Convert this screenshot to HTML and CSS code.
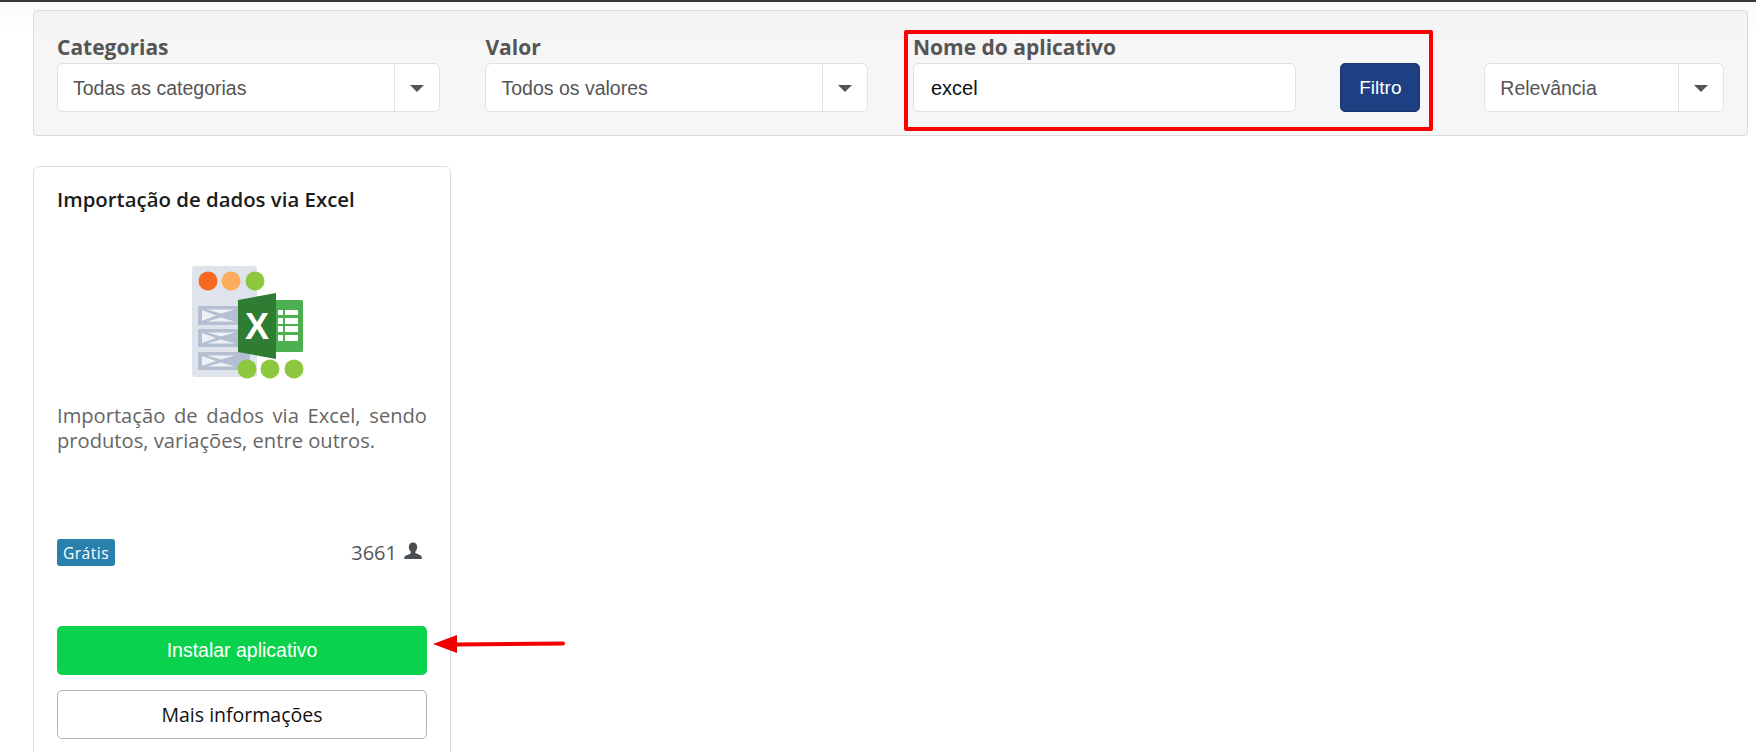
FILE: index.html
```html
<!DOCTYPE html>
<html lang="pt-BR">
<head>
<meta charset="utf-8">
<title>Aplicativos</title>
<link rel="stylesheet" href="styles.css">
</head>
<body>
<div class="topbar"></div>
<main class="content">
  <section class="filters">
    <div class="field field-first">
      <label class="field-label">Categorias</label>
      <div class="select"><span class="select-text">Todas as categorias</span><span class="select-arrow"><i class="caret"></i></span></div>
    </div>
    <div class="field">
      <label class="field-label">Valor</label>
      <div class="select"><span class="select-text">Todos os valores</span><span class="select-arrow"><i class="caret"></i></span></div>
    </div>
    <div class="field field-name">
      <label class="field-label">Nome do aplicativo</label>
      <div class="input">excel</div>
    </div>
    <button class="filter-btn">Filtro</button>
    <div class="select sort"><span class="select-text">Relevância</span><span class="select-arrow"><i class="caret"></i></span></div>
    <div class="highlight"></div>
  </section>

  <article class="card">
    <h2 class="card-title">Importação de dados via Excel</h2>
    <svg class="app-icon" viewBox="0 0 144 140" width="144" height="140" aria-hidden="true">
      <rect x="22" y="16" width="65" height="111" rx="3" fill="#dfe3ec"/>
      <circle cx="38" cy="31" r="9.5" fill="#f76822"/>
      <circle cx="61" cy="31" r="9.5" fill="#fbad5d"/>
      <circle cx="85" cy="31" r="9.5" fill="#8dc63f"/>
      <g>
        <rect x="28" y="56" width="52" height="19" fill="#b4bfd2"/>
        <path d="M37 59.500h28l-14 4zM37 71.500h28l-14-4zM32 60v11l14-5.500z" fill="#eef0f5"/>
        <rect x="28" y="79" width="52" height="18" fill="#b4bfd2"/>
        <path d="M37 82.500h28l-14 4zM37 93.500h28l-14-4zM32 83v10l14-5z" fill="#eef0f5"/>
        <rect x="28" y="102" width="52" height="18" fill="#b4bfd2"/>
        <path d="M37 105.500h28l-14 4zM37 116.500h28l-14-4zM32 106v10l14-5z" fill="#eef0f5"/>
      </g>
      <rect x="100" y="50" width="33" height="52" rx="1.500" fill="#4caf50"/>
      <g fill="#fff">
        <rect x="108" y="60" width="5" height="5"/><rect x="115" y="60" width="13" height="5"/>
        <rect x="108" y="68" width="5" height="6"/><rect x="115" y="68" width="13" height="6"/>
        <rect x="108" y="76" width="5" height="6"/><rect x="115" y="76" width="13" height="6"/>
        <rect x="108" y="85" width="5" height="6"/><rect x="115" y="85" width="13" height="6"/>
      </g>
      <path d="M68 50 106 43V109L68 102z" fill="#2e7d32"/>
      <text class="icon-x" x="87" y="89" text-anchor="middle">X</text>
      <circle cx="77" cy="119" r="9.500" fill="#8dc63f"/>
      <circle cx="100" cy="119" r="9.500" fill="#8dc63f"/>
      <circle cx="124" cy="119" r="9.500" fill="#8dc63f"/>
    </svg>
    <p class="card-desc">Importação de dados via Excel, sendo produtos, variações, entre outros.</p>
    <div class="card-meta">
      <span class="badge">Grátis</span>
      <span class="count">3661
        <svg class="user-icon" viewBox="0 0 18 18" width="18" height="18" aria-hidden="true"><path d="M9 0.500c2.700 0 4.200 1.900 4.200 4.500 0 1.900-.8 3.500-1.900 4.500v1.400l5.200 2.300c.8.400 1.200 1 1.200 1.800V17H.300v-1.500c0-.8.400-1.400 1.200-1.800l5.200-2.300V9.500C5.600 8.500 4.800 6.900 4.800 5 4.800 2.400 6.300.5 9 .5z" fill="#4a4f54"/></svg>
      </span>
    </div>
    <a class="btn btn-install">Instalar aplicativo</a>
    <a class="btn btn-more">Mais informações</a>
  </article>

  <svg class="arrow" viewBox="0 0 134 24" width="134" height="24" aria-hidden="true">
    <path d="M1 12 25 3V10.500L131 9.500a2 2 0 0 1 0 4L25 14.500V21z" fill="#f00000"/>
  </svg>
</main>
</body>
</html>
```

FILE: styles.css
```css
* { box-sizing: border-box; }
html, body { margin: 0; height: 752px; overflow: hidden; background: #fff; }
body { font-family: "Open Sans", sans-serif; color: #555; }

.topbar { height: 2px; background: #343a40; }

.content { position: relative; padding: 8px 8px 0 33px; background: linear-gradient(#fafafa, #fff 30px); }

.filters {
  position: relative;
  display: flex;
  align-items: flex-end;
  height: 126px;
  padding: 24px 23px 0;
  background: linear-gradient(#f3f3f3, #f6f6f6 40px);
  border: 1px solid #dcdcdc;
  border-radius: 4px;
}
.field { display: flex; flex-direction: column; width: 383px; margin-right: 45px; align-self: flex-start; }
.field-first { width: 384px; }
.field-name { width: 384px; margin-right: 44px; }
.field-label { height: 28px; font-size: 21px; font-weight: 700; line-height: 25px; color: #555; white-space: nowrap; }

.select, .input {
  display: flex;
  align-items: center;
  height: 49px;
  padding-top: 1px;
  background: #fff;
  border: 1px solid #e0e0e0;
  border-radius: 6px;
  font-family: "Liberation Sans", Arial, sans-serif;
  font-size: 19.5px;
}
.select-text { flex: 1; padding-left: 15px; color: #555; }
.select-arrow { display: flex; align-items: center; justify-content: center; width: 45px; height: 100%; border-left: 1px solid #e0e0e0; }
.caret { width: 0; height: 0; border-style: solid; border-width: 7px 7px 0; border-color: #555 transparent transparent; }
.input { padding-left: 17px; color: #111; font-size: 20px; }

.filter-btn {
  align-self: flex-start;
  width: 80px;
  height: 49px;
  margin-top: 28px;
  padding: 0;
  background: #1e3f82;
  border: 1px solid #1a3570;
  border-radius: 5px;
  color: #fff;
  font-family: "Liberation Sans", Arial, sans-serif;
  font-size: 19px;
}
.sort { align-self: flex-start; width: 240px; margin-top: 28px; margin-left: 64px; }

.highlight {
  position: absolute;
  left: 870px;
  top: 19px;
  width: 529px;
  height: 101px;
  border: 4px solid #f00;
  border-radius: 2px;
}

.card {
  width: 418px;
  height: 620px;
  margin-top: 30px;
  padding: 17px 23px 0;
  background: #fff;
  border: 1px solid #dcdcdc;
  border-radius: 6px;
}
.card-title { margin: 0; font-size: 20.4px; font-weight: 600; line-height: 30px; color: #1c1c1c; white-space: nowrap; }
.app-icon { display: block; margin: 36px auto 0; }
.card-desc { height: 136px; margin: 13px 0 0; font-size: 20.15px; line-height: 25px; color: #666; text-align: justify; }
.card-meta { display: flex; align-items: center; justify-content: space-between; height: 27px; padding-right: 5px; }
.badge { display: flex; align-items: center; height: 27px; padding: 0 6px; background: #2980ad; border-radius: 3px; color: #fff; font-size: 15.5px; font-weight: 500; letter-spacing: .5px; }
.count { display: flex; align-items: center; gap: 7px; font-size: 20px; color: #555; }
.user-icon { display: block; margin-top: -3px; }
.btn {
  display: flex;
  align-items: center;
  justify-content: center;
  height: 49px;
  border-radius: 5px;
}
.btn-install { margin-top: 60px; background: #0ad24c; color: #fff; font-family: "Liberation Sans", Arial, sans-serif; font-size: 19.5px; }
.btn-more { margin-top: 15px; background: #fff; border: 1px solid #b3b3b3; color: #111; font-size: 19.5px; }
.icon-x { font-family: "Liberation Sans", Arial, sans-serif; font-size: 36px; font-weight: 700; fill: #fff; }

.arrow { position: absolute; left: 432px; top: 630px; }
```
